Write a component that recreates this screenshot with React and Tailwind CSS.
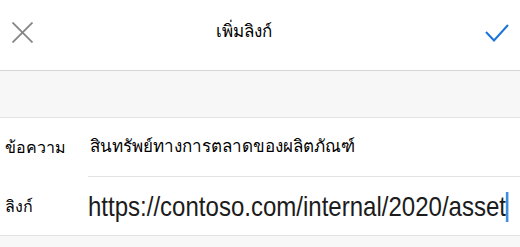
export default function App() {
  return (
    <div className="w-[520px] h-[247px] bg-[#f7f7f7] overflow-hidden font-['Liberation_Sans','Noto_Sans',sans-serif]">
      <header className="h-[71px] bg-white border-b border-[#d6d6d6] flex items-center pl-[12px] pr-[11px]">
        <svg width="21" height="21" viewBox="0 0 21 21" className="mt-[-6px] shrink-0">
          <path d="M0.5 0.5 L20.5 20.5 M20.5 0.5 L0.5 20.5" stroke="#858585" strokeWidth="1.8" />
        </svg>
        <div className="flex-1 text-center pr-[30px] pb-[7px] text-[17px] text-black">เพิ่มลิงก์</div>
        <svg width="24" height="18" viewBox="0 0 24 18" className="mt-[-5px] shrink-0">
          <path d="M1 8 L9 16.5 L23 1" stroke="#1b74d8" strokeWidth="2" fill="none" />
        </svg>
      </header>
      <div className="h-[47px] border-b border-[#e3e3e3]"></div>
      <section className="bg-white border-b border-[#e3e3e3]">
        <div className="flex h-[59px] items-center">
          <div className="w-[88px] shrink-0 pl-[5px] text-[16px] text-black">ข้อความ</div>
          <div className="flex-1 min-w-0 h-full flex items-center border-b border-[#e3e3e3] pl-[2px] text-[17px] text-black">สินทรัพย์ทางการตลาดของผลิตภัณฑ์</div>
        </div>
        <div className="flex h-[58px] items-center">
          <div className="w-[88px] shrink-0 pl-[5px] pt-[2px] text-[16px] text-black">ลิงก์</div>
          <div className="flex-1 min-w-0 flex items-center">
            <div className="flex items-center shrink-0 origin-left scale-x-[0.858] whitespace-nowrap text-[28px] leading-[32px] text-[#1c1c1c] pt-[1px]">
              <span>https://contoso.com/internal/2020/asset</span>
              <span className="inline-block w-[3px] h-[30px] bg-[#3d8ee0]"></span>
            </div>
          </div>
        </div>
      </section>
    </div>
  );
}
